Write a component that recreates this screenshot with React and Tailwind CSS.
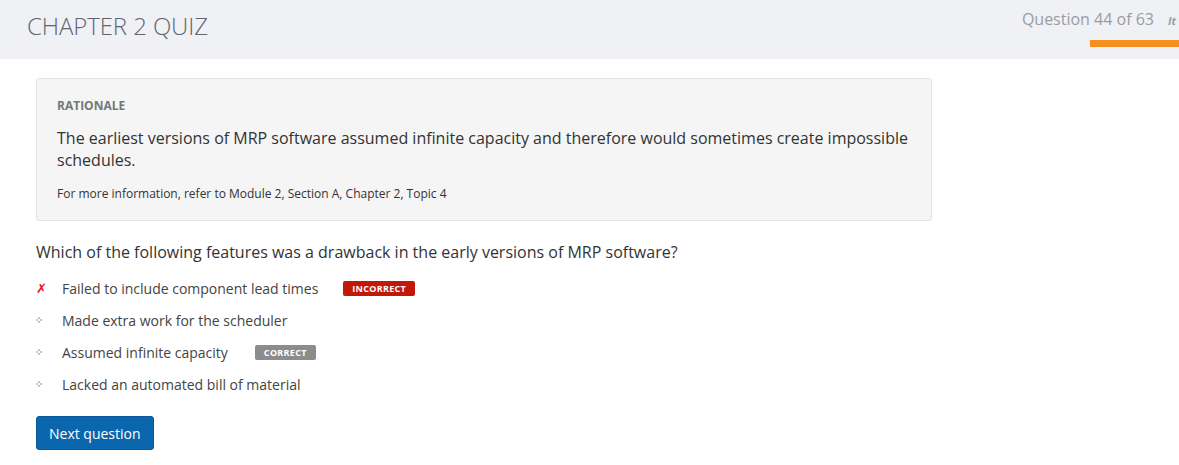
import React from "react";

const Bullet = () => (
  <svg width="6" height="6" viewBox="0 0 6 6" className="shrink-0">
    <rect x="2" y="0" width="2" height="2" fill="#c4c4c4" />
    <rect x="0" y="2" width="2" height="2" fill="#c4c4c4" />
    <rect x="4" y="2" width="2" height="2" fill="#c4c4c4" />
    <rect x="2" y="4" width="2" height="2" fill="#c4c4c4" />
  </svg>
);

const Cross = () => (
  <span className="text-[#e8141b] text-[13px] font-bold italic leading-none" style={{ fontFamily: '"DejaVu Sans", sans-serif' }}>✗</span>
);

export default function App() {
  const options = [
    { text: "Failed to include component lead times", icon: "x", badge: { label: "INCORRECT", cls: "bg-[#c21807] ml-[25px]" } },
    { text: "Made extra work for the scheduler" },
    { text: "Assumed infinite capacity", badge: { label: "CORRECT", cls: "bg-[#8c8c8c] ml-[27px]" } },
    { text: "Lacked an automated bill of material" },
  ];
  return (
    <div className="w-[1179px] h-[465px] bg-white overflow-hidden" style={{ fontFamily: '"Open Sans", sans-serif' }}>
      <header className="h-[59px] bg-[#f0f1f4] flex justify-between">
        <h1 className="pl-[27px] pt-[8px] text-[24px] font-light text-[#5f6672] tracking-[-0.1px]">CHAPTER 2 QUIZ</h1>
        <div className="flex flex-col items-end pt-[7px]">
          <div className="flex items-baseline">
            <span className="text-[16px] text-[#999da3]">Question 44 of 63</span>
            <span className="ml-[14px] text-[11px] font-bold italic text-[#999da3] w-[11px] overflow-hidden whitespace-nowrap">It</span>
          </div>
          <div className="mt-[9px] w-[89px] h-[7px] bg-[#f39020]" />
        </div>
      </header>
      <main className="px-[36px] pt-[19px]">
        <section className="w-[896px] bg-[#f5f5f5] border border-[#e3e3e3] rounded-[3px] px-[20px] pt-[18px] pb-[17px]">
          <div className="text-[12px] font-bold text-[#777] leading-[18px]">RATIONALE</div>
          <p className="mt-[12px] text-[16px] leading-[22px] text-[#333]">
            The earliest versions of MRP software assumed infinite capacity and therefore would sometimes create impossible schedules.
          </p>
          <p className="mt-[14px] text-[12px] leading-[18px] text-[#333]">
            For more information, refer to Module 2, Section A, Chapter 2, Topic 4
          </p>
        </section>
        <p className="mt-[19px] text-[16px] leading-[24px] text-[#333]">
          Which of the following features was a drawback in the early versions of MRP software?
        </p>
        <ul className="mt-[8px] flex flex-col">
          {options.map((o, i) => (
            <li key={i} className="h-[32px] flex items-center">
              <span className="w-[26px] flex items-center">
                {o.icon === "x" ? <Cross /> : <Bullet />}
              </span>
              <span className="text-[14px] text-[#444]">{o.text}</span>
              {o.badge && (
                <span className={`${o.badge.cls} text-white text-[9px] font-bold tracking-[0.3px] rounded-[2px] h-[15px] px-[9px] flex items-center leading-none`}>
                  {o.badge.label}
                </span>
              )}
            </li>
          ))}
        </ul>
        <button className="mt-[16px] h-[34px] px-[12px] bg-[#0a66ad] border border-[#09599a] rounded-[3px] text-white text-[14px]">
          Next question
        </button>
      </main>
    </div>
  );
}
